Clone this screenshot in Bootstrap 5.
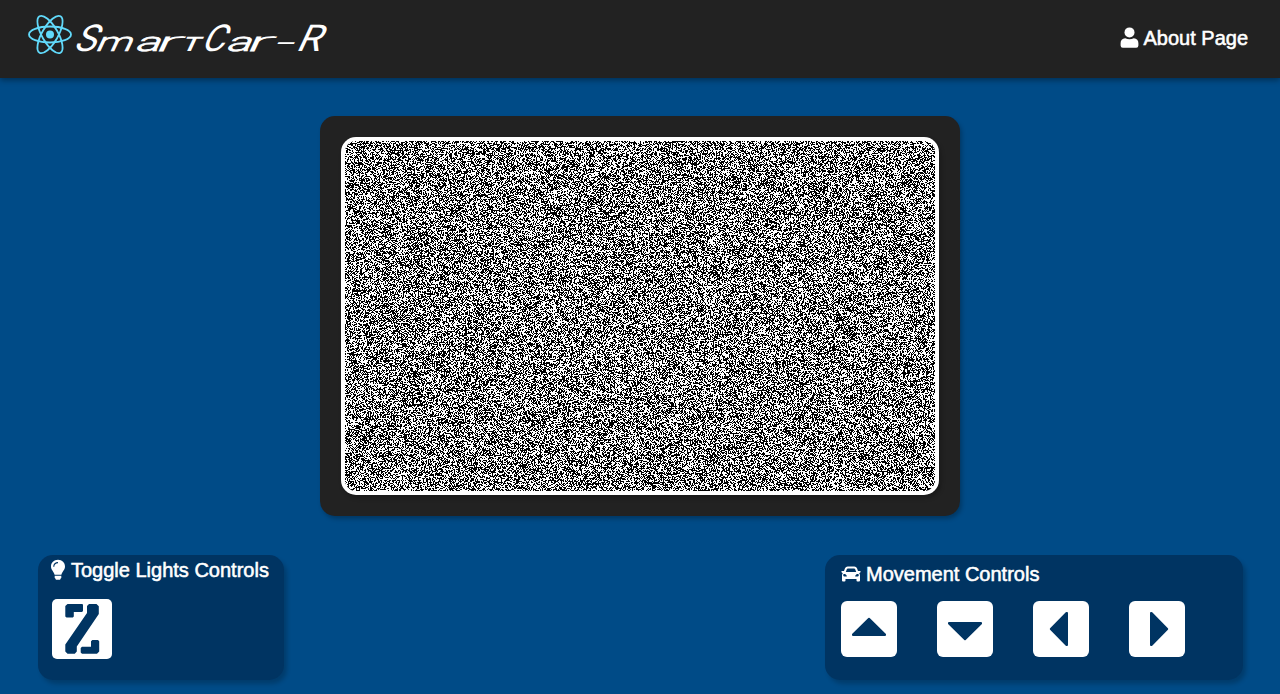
<!DOCTYPE html>
<html lang="en">
<head>
<meta charset="utf-8">
<meta name="viewport" content="width=device-width, initial-scale=1">
<title>SmartCar-R</title>
<link href="https://cdn.jsdelivr.net/npm/bootstrap@5.3.0/dist/css/bootstrap.min.css" rel="stylesheet">
<style>
  body { background: #004b87; font-family: "Liberation Sans", Arial, sans-serif; color: #fff; font-size: 20px; -webkit-text-stroke: .55px #fff; }
  .topbar { background: #222; height: 78px; box-shadow: 0 2px 6px rgba(0,0,0,.4); padding: 0 32px 0 28px; }
  .wordmark { font-family: Roboto, sans-serif; font-weight: 400; fill: #fff; -webkit-text-stroke: 0; }
  .wordmark .thin { font-weight: 300; stroke: #fff; stroke-width: .7px; }
  .wordmark .hair { font-weight: 100; stroke: #fff; stroke-width: 1px; }
  .wordmark .firm { font-weight: 500; }
  .screen { background: #222; width: 640px; height: 400px; border-radius: 15px; margin: 38px auto 0; padding: 21px; box-shadow: 2px 3px 4px rgba(0,0,0,.25); }
  .feed { background: #fff; width: 598px; height: 358px; border-radius: 15px; padding: 4px; box-shadow: 2px 3px 4px rgba(0,0,0,.25); }
  .feed canvas { border-radius: 11px; }
  .panel { background: #003462; border-radius: 15px; height: 125px; box-shadow: 3px 4px 4px rgba(0,0,0,.2); }
  .panel-title { line-height: 24px; white-space: nowrap; }
  .lights { width: 246px; padding: 3px 14px 0 12px; }
  .moves { width: 418px; padding: 7px 16px 0; }
  .key { width: 56px; height: 56px; background: #fff; border-radius: 6px; color: #003462; padding: 0; border: 0; display: block; }
  .key-lg { width: 60px; height: 60px; border-radius: 5px; margin-left: 2px; }
  svg { display: block; flex: none; }
</style>
</head>
<body class="overflow-hidden min-vh-100">
<nav class="topbar d-flex justify-content-between">
  <a class="d-flex text-white text-decoration-none" href="#" aria-label="SmartCar-R">
    <svg width="44" height="70" viewBox="0 0 44 70" fill="none" stroke="#61dafb" stroke-width="1.8">
      <g transform="translate(22 34.5)">
        <circle r="4" fill="#61dafb" stroke="none"/>
        <ellipse rx="21" ry="8"/>
        <ellipse rx="21" ry="8" transform="rotate(60)"/>
        <ellipse rx="21" ry="8" transform="rotate(120)"/>
      </g>
    </svg>
    <svg class="wordmark" width="262" height="70" viewBox="72 0 262 70">
      <g transform="translate(0 51) skewX(-25)">
        <text font-size="37"><tspan x="72.5" textLength="22" lengthAdjust="spacingAndGlyphs">S</tspan><tspan class="thin" x="94.5" textLength="36" lengthAdjust="spacingAndGlyphs" font-size="26.5">m</tspan><tspan class="thin" x="134" textLength="25" lengthAdjust="spacingAndGlyphs" font-size="26.5">a</tspan><tspan class="hair" x="154" textLength="25" lengthAdjust="spacingAndGlyphs" font-size="26.5">r</tspan><tspan class="firm" x="180" textLength="18" lengthAdjust="spacingAndGlyphs" font-size="20">T</tspan><tspan x="200" textLength="23" lengthAdjust="spacingAndGlyphs">C</tspan><tspan class="thin" x="225" textLength="25" lengthAdjust="spacingAndGlyphs" font-size="26.5">a</tspan><tspan class="hair" x="245" textLength="25" lengthAdjust="spacingAndGlyphs" font-size="26.5">r</tspan><tspan x="273" textLength="19" lengthAdjust="spacingAndGlyphs" font-size="26">-</tspan><tspan x="295" textLength="24" lengthAdjust="spacingAndGlyphs">R</tspan></text>
      </g>
    </svg>
  </a>
  <a class="d-flex align-items-center text-white text-decoration-none" href="#" style="height:76px">
    <svg class="me-1" width="19" height="22" viewBox="0 0 19 22" fill="#fff"><circle cx="9.5" cy="5.4" r="5"/><path d="M5.2 11.2q4.3 2 8.6 0C16.8 11.4 18.4 13.4 18.4 16.2V18.6Q18.4 20.8 16.2 20.8H2.8Q.6 20.8.6 18.6V16.2C.6 13.4 2.2 11.4 5.2 11.2z"/></svg>
    <span>About Page</span>
  </a>
</nav>

<main>
  <div class="screen"><div class="feed"><canvas id="static" class="d-block" width="590" height="350"></canvas></div></div>
  <div class="d-flex justify-content-between" style="padding:39px 37px 14px 38px">
    <section class="panel lights">
      <div class="panel-title d-flex align-items-center">
        <svg width="16" height="22" viewBox="0 0 16 22" fill="#fff"><path fill-rule="evenodd" d="M8 .7C3.8.7 1 3.7 1 7.4c0 3.4 2.6 4.8 3.6 8.3h6.8C12.4 12.2 15 10.8 15 7.4 15 3.7 12.2.7 8 .7zM8 3v1.2C5.8 4.2 4.3 5.5 4.3 7.7H3.2C3.2 4.9 5.2 3 8 3z"/><path d="M4.7 16.8h6.6v1.8L10 20.7H6l-1.3-2.1z"/></svg>
        <span style="margin-left:5px">Toggle Lights Controls</span>
      </div>
      <button class="key key-lg" style="margin-top:17px" aria-label="Toggle lights">
        <svg width="60" height="60" viewBox="0 0 60 60" fill="currentColor"><path d="M15.5 5H30Q31 5 31 6V12L30 13H21.8V17.5L20.8 18.5H14.5L13.3 17.5V7z"/><path d="M37 5H44.500L46.800 7.300V15L24.800 47.500V52.500L22.800 54.800H15.500L13.300 52.500V45.500L35 14V7z"/><path d="M40.300 41H46L47.200 42.200V52.500L45 54.800H30L28.700 53.500V49L30 47.700H39V42.200z"/></svg>
      </button>
    </section>
    <section class="panel moves">
      <div class="panel-title d-flex align-items-center">
        <svg width="20" height="18" viewBox="0 0 20 18" fill="#fff"><path fill-rule="evenodd" d="M6.700 1.500h6.600q2 0 2.700 1.800L17 6h2.500v1.200L18.200 8.200Q19 9 19 10.500V15.500q0 1-1 1h-1.500q-1 0-1-1V14h-11v1.500q0 1-1 1H2q-1 0-1-1V10.500Q1 9 1.800 8.200L.5 7.200V6H3L4 3.300q.7-1.800 2.700-1.800zM6.900 3.500q-.8 0-1.100.8L4.800 7h10.400l-1-2.700q-.3-.8-1.100-.8zM4.500 9.200c-1.600-.5-2.300 0-2.300.9 0 1 .6 1.500 2 1.500 2.200 0 2.300-.5.300-2.400zM15.500 9.200c-2 1.900-1.900 2.400.3 2.400 1.400 0 2-.5 2-1.500 0-.9-.7-1.400-2.300-.9z"/></svg>
        <span style="margin-left:5px">Movement Controls</span>
      </div>
      <div class="d-flex" style="gap:40px;margin-top:15px">
        <button class="key" aria-label="Forward"><svg width="56" height="56" viewBox="0 0 56 56" fill="currentColor" stroke="currentColor" stroke-width="2" stroke-linejoin="round"><path d="M28 17.800L44 33.500V34H12V33.500z"/></svg></button>
        <button class="key" aria-label="Backward"><svg width="56" height="56" viewBox="0 0 56 56" fill="currentColor" stroke="currentColor" stroke-width="2" stroke-linejoin="round"><path d="M28 38.200L44 22.500V22H12V22.500z"/></svg></button>
        <button class="key" aria-label="Left"><svg width="56" height="56" viewBox="0 0 56 56" fill="currentColor" stroke="currentColor" stroke-width="2" stroke-linejoin="round"><path d="M17.800 28L33.500 12H34V44H33.500z"/></svg></button>
        <button class="key" aria-label="Right"><svg width="56" height="56" viewBox="0 0 56 56" fill="currentColor" stroke="currentColor" stroke-width="2" stroke-linejoin="round"><path d="M38.200 28L22.500 12H22V44H22.500z"/></svg></button>
      </div>
    </section>
  </div>
</main>
<script src="https://cdn.jsdelivr.net/npm/bootstrap@5.3.0/dist/js/bootstrap.bundle.min.js"></script>
<script>
  // TV static shown while no camera feed is connected
  const ctx = document.getElementById('static').getContext('2d');
  const frame = ctx.createImageData(590, 350);
  const px = new Uint32Array(frame.data.buffer);
  let seed = 20177;
  for (let i = 0; i < px.length; i++) {
    seed ^= seed << 13; seed ^= seed >>> 17; seed ^= seed << 5;
    px[i] = (seed & 0x10000) ? 0xffffffff : 0xff000000;
  }
  ctx.putImageData(frame, 0, 0);
</script>
</body>
</html>
